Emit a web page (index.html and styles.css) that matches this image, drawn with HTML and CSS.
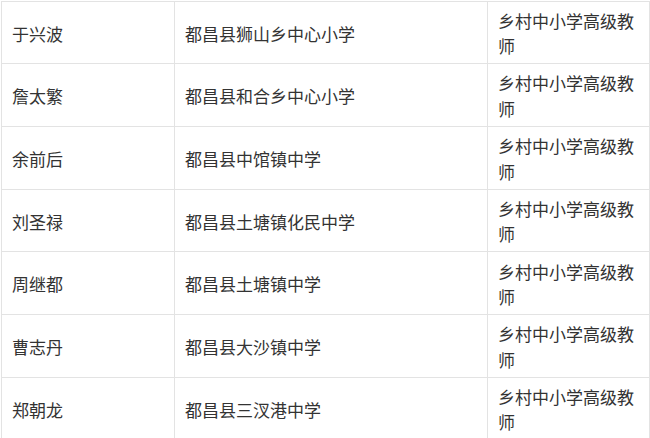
FILE: index.html
```html
<!DOCTYPE html>
<html lang="zh-CN">
<head>
<meta charset="utf-8">
<link rel="stylesheet" href="styles.css">
</head>
<body>
<table class="list">
  <colgroup>
    <col class="c1"><col class="c2"><col class="c3">
  </colgroup>
  <tbody>
    <tr><td>于兴波</td><td>都昌县狮山乡中心小学</td><td>乡村中小学高级教师</td></tr>
    <tr><td>詹太繁</td><td>都昌县和合乡中心小学</td><td>乡村中小学高级教师</td></tr>
    <tr><td>余前后</td><td>都昌县中馆镇中学</td><td>乡村中小学高级教师</td></tr>
    <tr><td>刘圣禄</td><td>都昌县土塘镇化民中学</td><td>乡村中小学高级教师</td></tr>
    <tr><td>周继都</td><td>都昌县土塘镇中学</td><td>乡村中小学高级教师</td></tr>
    <tr><td>曹志丹</td><td>都昌县大沙镇中学</td><td>乡村中小学高级教师</td></tr>
    <tr><td>郑朝龙</td><td>都昌县三汊港中学</td><td>乡村中小学高级教师</td></tr>
  </tbody>
</table>
</body>
</html>
```
FILE: styles.css
```css
html, body {
  margin: 0;
  padding: 0;
  background: #ffffff;
}
body {
  padding: 0.6px 0 0 1px;
  overflow: hidden;
  font-family: "Noto Sans CJK SC", "Noto Sans", sans-serif;
  color: #333333;
}
.list {
  border-collapse: collapse;
  table-layout: fixed;
  width: 648px;
  font-size: 17px;
  line-height: 25.5px;
}
.c1 { width: 173px; }
.c2 { width: 313px; }
.c3 { width: 162px; }
.list td {
  border: 1px solid #e3e3e3;
  padding: 6.2px 10px 4.5px 10px;
  vertical-align: middle;
  text-align: left;
}
```
